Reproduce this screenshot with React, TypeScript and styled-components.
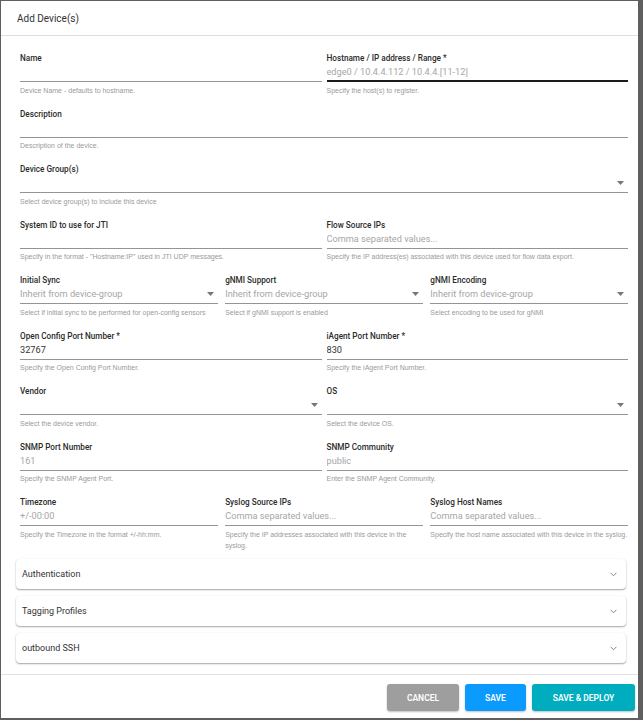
import React from "react";
import styled, { createGlobalStyle } from "styled-components";

const Global = createGlobalStyle`
  html, body { margin: 0; padding: 0; background: #5f5f5f; }
  body { font-family: Roboto, "Liberation Sans", Arial, sans-serif; }
  * { box-sizing: border-box; }
`;

const Dialog = styled.div`
  margin: 1px 5px 2px 1px;
  width: 637px;
  height: 717px;
  background: #fff;
  display: flex;
  flex-direction: column;
`;

const Header = styled.div`
  height: 35px;
  flex: none;
  border-bottom: 1px solid #dedede;
  padding: 0 16px;
  display: flex;
  align-items: center;
  font-size: 10px;
  color: #333;
`;

const Body = styled.div`
  flex: 1;
  overflow: hidden;
  padding: 17px 10px 11px 19px;
  display: flex;
  flex-direction: column;
`;

const Rows = styled.div`
  display: flex;
  flex-direction: column;
  gap: 13px;
`;

const Row = styled.div<{ $cols: number }>`
  display: grid;
  grid-template-columns: repeat(${(p) => p.$cols}, 1fr);
  column-gap: ${(p) => (p.$cols === 3 ? "7.5px" : "5px")};
`;

const Field = styled.div`
  display: flex;
  flex-direction: column;
  min-width: 0;
`;

const Label = styled.div`
  font-size: 8.2px;
  line-height: 10px;
  height: 10px;
  font-weight: 500;
  color: #2b2b2b;
  white-space: nowrap;
`;

const InputBox = styled.div<{ $focused?: boolean; $muted?: boolean }>`
  height: 19px;
  display: flex;
  align-items: center;
  padding-bottom: 1px;
  border-bottom: ${(p) => (p.$focused ? "2px solid #1c1c1c" : "1px solid #949494")};
  font-size: 9.2px;
  color: ${(p) => (p.$muted ? "#a6a6a6" : "#333")};
  white-space: nowrap;
  overflow: hidden;
`;

const InputText = styled.span`
  flex: 1;
  min-width: 0;
  overflow: hidden;
`;

const Arrow = styled.svg`
  flex: none;
  width: 7px;
  height: 4px;
  margin-right: 4px;
`;

const Helper = styled.div`
  margin-top: 2.5px;
  font-family: "Liberation Sans", Arial, sans-serif;
  font-size: 7px;
  line-height: 11px;
  color: #9a9a9a;
`;

const Accordions = styled.div`
  margin: 8.5px 2px 0 -4px;
  display: flex;
  flex-direction: column;
  gap: 7px;
`;

const AccordionCard = styled.div`
  height: 30px;
  flex: none;
  display: flex;
  align-items: center;
  justify-content: space-between;
  padding: 0 9px 0 6px;
  background: #fff;
  border-radius: 4px;
  box-shadow: 0 1px 2px rgba(0, 0, 0, 0.25), 0 1px 1px rgba(0, 0, 0, 0.12),
    0 0 1px rgba(0, 0, 0, 0.1);
  font-size: 9px;
  color: #333;
`;

const Chevron = styled.svg`
  width: 7px;
  height: 5px;
`;

const Footer = styled.div`
  flex: none;
  border-top: 1px solid #e2e2e2;
  padding: 9px 3px 7px;
  display: flex;
  justify-content: flex-end;
  gap: 6px;
`;

const Button = styled.button<{ $bg: string; $w: number }>`
  width: ${(p) => p.$w}px;
  height: 27px;
  border: none;
  border-radius: 3px;
  background: ${(p) => p.$bg};
  color: #fff;
  font-family: Roboto, "Liberation Sans", Arial, sans-serif;
  font-size: 8.5px;
  font-weight: 600;
  text-transform: uppercase;
  box-shadow: 0 1px 2px rgba(0, 0, 0, 0.25);
  padding: 0;
`;

type F = {
  label: string;
  value?: string;
  muted?: boolean;
  helper?: string;
  select?: boolean;
  focused?: boolean;
};

const DropArrow = () => (
  <Arrow viewBox="0 0 7 4">
    <path d="M0 0 L7 0 L3.5 4 Z" fill="#777" />
  </Arrow>
);

const FormField = ({ label, value, muted, helper, select, focused }: F) => (
  <Field>
    <Label>{label}</Label>
    <InputBox $focused={focused} $muted={muted}>
      <InputText>{value}</InputText>
      {select && <DropArrow />}
    </InputBox>
    <Helper>{helper}</Helper>
  </Field>
);

const rows: { cols: number; fields: F[] }[] = [
  {
    cols: 2,
    fields: [
      { label: "Name", helper: "Device Name - defaults to hostname." },
      {
        label: "Hostname / IP address / Range *",
        value: "edge0 / 10.4.4.112 / 10.4.4.[11-12]",
        muted: true,
        focused: true,
        helper: "Specify the host(s) to register.",
      },
    ],
  },
  { cols: 1, fields: [{ label: "Description", helper: "Description of the device." }] },
  {
    cols: 1,
    fields: [
      { label: "Device Group(s)", select: true, helper: "Select device group(s) to include this device" },
    ],
  },
  {
    cols: 2,
    fields: [
      {
        label: "System ID to use for JTI",
        helper: 'Specify in the format - "Hostname:IP" used in JTI UDP messages.',
      },
      {
        label: "Flow Source IPs",
        value: "Comma separated values...",
        muted: true,
        helper: "Specify the IP address(es) associated with this device used for flow data export.",
      },
    ],
  },
  {
    cols: 3,
    fields: [
      {
        label: "Initial Sync",
        value: "Inherit from device-group",
        muted: true,
        select: true,
        helper: "Select if initial sync to be performed for open-config sensors",
      },
      {
        label: "gNMI Support",
        value: "Inherit from device-group",
        muted: true,
        select: true,
        helper: "Select if gNMI support is enabled",
      },
      {
        label: "gNMI Encoding",
        value: "Inherit from device-group",
        muted: true,
        select: true,
        helper: "Select encoding to be used for gNMI",
      },
    ],
  },
  {
    cols: 2,
    fields: [
      { label: "Open Config Port Number *", value: "32767", helper: "Specify the Open Config Port Number." },
      { label: "iAgent Port Number *", value: "830", helper: "Specify the iAgent Port Number." },
    ],
  },
  {
    cols: 2,
    fields: [
      { label: "Vendor", select: true, helper: "Select the device vendor." },
      { label: "OS", select: true, helper: "Select the device OS." },
    ],
  },
  {
    cols: 2,
    fields: [
      { label: "SNMP Port Number", value: "161", muted: true, helper: "Specify the SNMP Agent Port." },
      { label: "SNMP Community", value: "public", muted: true, helper: "Enter the SNMP Agent Community." },
    ],
  },
  {
    cols: 3,
    fields: [
      {
        label: "Timezone",
        value: "+/-00:00",
        muted: true,
        helper: "Specify the Timezone in the format +/-hh:mm.",
      },
      {
        label: "Syslog Source IPs",
        value: "Comma separated values...",
        muted: true,
        helper: "Specify the IP addresses associated with this device in the syslog.",
      },
      {
        label: "Syslog Host Names",
        value: "Comma separated values...",
        muted: true,
        helper: "Specify the host name associated with this device in the syslog.",
      },
    ],
  },
];

const sections = ["Authentication", "Tagging Profiles", "outbound SSH"];

export default function App() {
  return (
    <>
      <Global />
      <Dialog>
        <Header>Add Device(s)</Header>
        <Body>
          <Rows>
            {rows.map((r, i) => (
              <Row key={i} $cols={r.cols}>
                {r.fields.map((f) => (
                  <FormField key={f.label} {...f} />
                ))}
              </Row>
            ))}
          </Rows>
          <Accordions>
            {sections.map((s) => (
              <AccordionCard key={s}>
                <span>{s}</span>
                <Chevron viewBox="0 0 7 5">
                  <path d="M0.6 0.8 L3.5 3.8 L6.4 0.8" fill="none" stroke="#8a8a8a" strokeWidth="1" />
                </Chevron>
              </AccordionCard>
            ))}
          </Accordions>
        </Body>
        <Footer>
          <Button $bg="#9e9e9e" $w={72}>Cancel</Button>
          <Button $bg="#0b9bff" $w={61}>Save</Button>
          <Button $bg="#00adbf" $w={103}>Save &amp; Deploy</Button>
        </Footer>
      </Dialog>
    </>
  );
}
